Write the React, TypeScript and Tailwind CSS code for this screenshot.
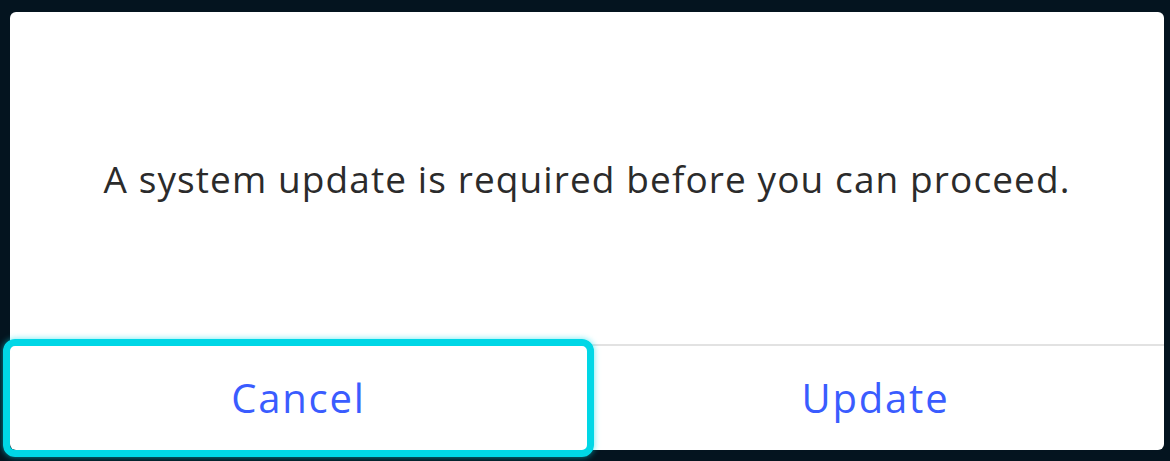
import React from 'react';

const font = { fontFamily: '"Open Sans", "Noto Sans", sans-serif' };

const DialogButton: React.FC<{ label: string; focused?: boolean }> = ({ label, focused }) => (
  <button className="relative flex flex-1 items-center justify-center text-[40px] tracking-[1.8px] text-[#3a5cff]">
    {focused && (
      <span className="pointer-events-none absolute -inset-[7px] rounded-[12px] border-[7px] border-[#00d7e6] shadow-[0_0_6px_rgba(0,220,235,0.6)]" />
    )}
    <span className="relative">{label}</span>
  </button>
);

export default function App() {
  return (
    <div className="h-[461px] w-full bg-[#04141f] pt-3 pl-[10px] pr-[6px]" style={font}>
      <div className="flex h-[438px] flex-col rounded-[6px] bg-white">
        <div className="flex flex-1 items-center justify-center pt-[2px] text-[37px] tracking-[1.1px] text-[#2b2b2b]">
          A system update is required before you can proceed.
        </div>
        <div className="flex h-[106px] border-t-2 border-[#e2e2e2]">
          <DialogButton label="Cancel" focused />
          <DialogButton label="Update" />
        </div>
      </div>
    </div>
  );
}
